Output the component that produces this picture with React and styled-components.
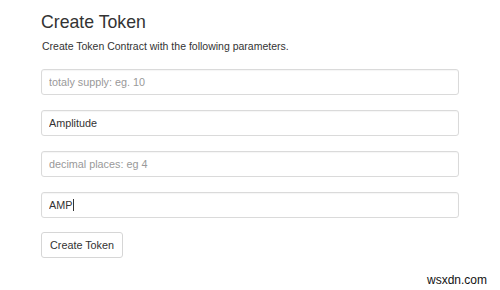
import React from "react";
import styled, { createGlobalStyle } from "styled-components";

const Global = createGlobalStyle`
  html, body { margin: 0; padding: 0; background: #fff; }
  body { font-family: "Liberation Sans", Arial, sans-serif; color: #333; }
  * { box-sizing: border-box; }
`;

const Page = styled.div`
  position: relative;
  width: 500px;
  height: 290px;
  padding: 12px 41px 0 41px;
  overflow: hidden;
`;

const Title = styled.h1`
  margin: 0;
  font-size: 17.7px;
  line-height: 20px;
  font-weight: 400;
  color: #333;
`;

const Subtitle = styled.p`
  margin: 7px 0 0 1px;
  font-size: 10.5px;
  line-height: 14px;
  color: #333;
`;

const Form = styled.div`
  margin-top: 16px;
  display: flex;
  flex-direction: column;
  gap: 15px;
`;

const FieldWrap = styled.div`
  position: relative;
`;

const Input = styled.input`
  display: block;
  width: 100%;
  height: 26px;
  padding: 0 7px;
  border: 1px solid #dadada;
  border-radius: 3px;
  font-family: "Liberation Sans", Arial, sans-serif;
  font-size: 10.8px;
  color: #333;
  background: #fff;
  outline: none;
  box-shadow: inset 0 1px 1px rgba(0, 0, 0, 0.04);
  &::placeholder { color: #999; }
`;

const Caret = styled.span`
  position: absolute;
  left: ${(p) => p.$left}px;
  top: 7px;
  width: 1px;
  height: 12px;
  background: #333;
`;

const Button = styled.button`
  align-self: flex-start;
  margin-top: -1px;
  height: 26px;
  padding: 0 8px;
  border: 1px solid #d6d6d6;
  border-radius: 3px;
  background: #fff;
  font-family: "Liberation Sans", Arial, sans-serif;
  font-size: 10.8px;
  color: #333;
`;

const Watermark = styled.span`
  position: absolute;
  left: 427px;
  top: 273px;
  font-family: "Liberation Sans", Arial, sans-serif;
  font-size: 12px;
  color: #111;
`;

export default function App() {
  return (
    <>
      <Global />
      <Page>
        <Title>Create Token</Title>
        <Subtitle>Create Token Contract with the following parameters.</Subtitle>
        <Form>
          <FieldWrap>
            <Input placeholder="totaly supply: eg. 10" readOnly />
          </FieldWrap>
          <FieldWrap>
            <Input defaultValue="Amplitude" readOnly />
          </FieldWrap>
          <FieldWrap>
            <Input placeholder="decimal places: eg 4" readOnly />
          </FieldWrap>
          <FieldWrap>
            <Input defaultValue="AMP" readOnly />
            <Caret $left={32} />
          </FieldWrap>
          <Button>Create Token</Button>
        </Form>
        <Watermark>wsxdn.com</Watermark>
      </Page>
    </>
  );
}
